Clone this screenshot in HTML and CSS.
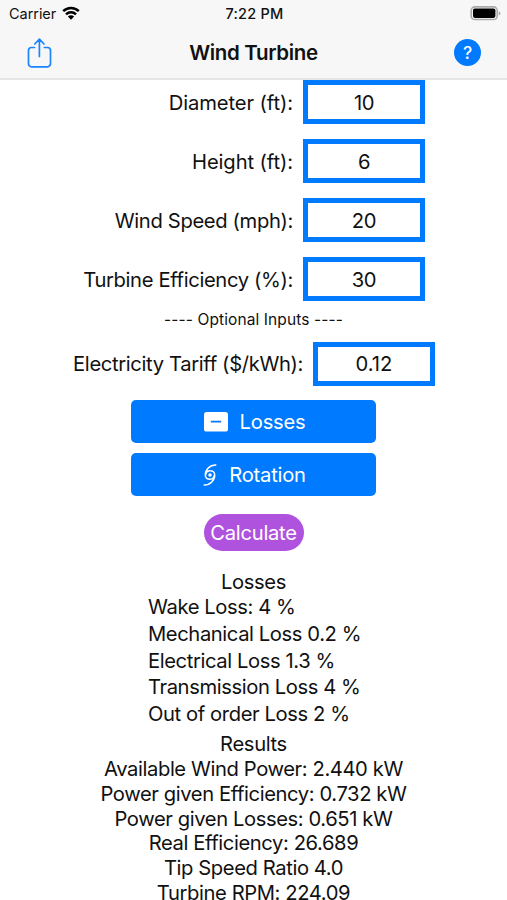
FILE: index.html
```html
<!DOCTYPE html>
<html lang="en">
<head>
    <meta charset="UTF-8">
    <meta name="viewport" content="width=device-width, initial-scale=1.0">
    <title>Wind Turbine</title>
    <link rel="stylesheet" href="styles.css">
</head>
<body>
    <header class="header">
        <div class="status-bar">
            <div class="carrier">
                <span>Carrier</span>
                <svg class="wifi" viewBox="0 0 18 14">
                    <path d="M1.2 5.2a11.2 11.2 0 0 1 15.6 0M4 8.3a7.2 7.2 0 0 1 10 0" fill="none" stroke="#000" stroke-width="2.5"/>
                    <path d="M9 13.8L5.9 10.5a4.4 4.4 0 0 1 6.2 0z"/>
                </svg>
            </div>
            <div class="time">7:22 PM</div>
            <svg class="battery" viewBox="0 0 31 15">
                <rect x="1.2" y="0.9" width="26" height="12.6" rx="3.6" fill="#f7f7f7" stroke="#aaa" stroke-width="1.6"/>
                <rect x="3" y="2.5" width="22.4" height="9.4" rx="1.8"/>
                <path d="M28.7 5.2c2.4 1 2.4 3.2 0 4.2z" fill="#aaa"/>
            </svg>
        </div>
        <div class="nav-bar">
            <svg class="share" viewBox="0 0 26 30" fill="none" stroke="#1a84fc" stroke-width="1.7" stroke-linecap="round" stroke-linejoin="round">
                <path d="M8.5 9.5H5.5A3 3 0 0 0 2.5 12.5V25.8a3 3 0 0 0 3 3h16a3 3 0 0 0 3-3V12.5a3 3 0 0 0-3-3H18.3M13.4 18.5V1.5M8.8 6L13.4 1.2 18 6"/>
            </svg>
            <h1>Wind Turbine</h1>
            <button class="help">?</button>
        </div>
    </header>
    <main class="container">
        <div class="form-group">
            <label for="diameter" class="wide">Diameter (ft):</label>
            <input type="text" id="diameter" value="10">
        </div>
        <div class="form-group">
            <label for="height" class="wide">Height (ft):</label>
            <input type="text" id="height" value="6">
        </div>
        <div class="form-group">
            <label for="speed">Wind Speed (mph):</label>
            <input type="text" id="speed" value="20">
        </div>
        <div class="form-group">
            <label for="efficiency">Turbine Efficiency (%):</label>
            <input type="text" id="efficiency" value="30">
        </div>
        <p class="optional">---- Optional Inputs ----</p>
        <div class="form-group tariff">
            <label for="tariff">Electricity Tariff ($/kWh):</label>
            <input type="text" id="tariff" value="0.12">
        </div>
        <button class="option-btn">
            <svg class="minus-icon" viewBox="0 0 24 20">
                <rect width="24" height="19.5" rx="2.6" fill="#fff"/>
                <path d="M7.6 9.7h8.8" stroke="#007aff" stroke-width="1.8" stroke-linecap="round"/>
            </svg>
            <span>Losses</span>
        </button>
        <button class="option-btn">
            <svg class="spin-icon" viewBox="0 0 14 22" fill="none" stroke="#fff" stroke-width="1.5" stroke-linecap="round">
                <circle cx="7" cy="11" r="1" fill="#fff"/>
                <path d="M12.8 1C7 .8 2 5.8 2.3 11.2c.2 2.4 2.1 4 4.5 4a4.3 4.3 0 0 0 4.4-3.7M1.2 21c5.8.2 10.8-4.8 10.5-10.2-.2-2.4-2.1-4-4.5-4a4.3 4.3 0 0 0-4.4 3.7"/>
            </svg>
            <span>Rotation</span>
        </button>
        <button class="calculate-btn">Calculate</button>
        <h2 class="losses-title">Losses</h2>
        <ul class="losses">
            <li>Wake Loss: 4 %</li>
            <li>Mechanical Loss 0.2 %</li>
            <li>Electrical Loss 1.3 %</li>
            <li>Transmission Loss 4 %</li>
            <li>Out of order Loss 2 %</li>
        </ul>
        <h2 class="results-title">Results</h2>
        <ul class="results">
            <li>Available Wind Power: 2.440 kW</li>
            <li>Power given Efficiency: 0.732 kW</li>
            <li>Power given Losses: 0.651 kW</li>
            <li>Real Efficiency: 26.689</li>
            <li>Tip Speed Ratio 4.0</li>
            <li>Turbine RPM: 224.09</li>
        </ul>
    </main>
</body>
</html>
```
FILE: styles.css
```css
*{
    box-sizing: border-box;
}
body{
    margin: 0;
    height: 900px;
    display: flex;
    flex-direction: column;
    overflow: hidden;
    background-color: #fff;
    color: #111;
    font-family: Inter, "Liberation Sans", sans-serif;
    font-size: 20.2px;
    letter-spacing: -0.35px;
}
h1, h2, p, ul{
    margin: 0;
    padding: 0;
    font-weight: 400;
    list-style: none;
}
button, input{
    font: inherit;
    letter-spacing: inherit;
    border: none;
    padding: 0;
}
svg{
    display: block;
}
.header{
    flex: none;
    height: 80px;
    background-color: #f7f7f7;
    border-bottom: 2px solid #e6e6e6;
}
.status-bar{
    display: grid;
    grid-template-columns: 1fr auto 1fr;
    align-items: center;
    height: 27px;
    padding: 0 7px 0 9px;
}
.carrier{
    display: flex;
    align-items: center;
    gap: 6px;
    font-size: 14.5px;
    letter-spacing: -0.05px;
}
.wifi{
    width: 18px;
    height: 14px;
    margin-top: -1px;
}
.time{
    font-weight: 550;
    font-size: 14.5px;
    letter-spacing: 0.25px;
}
.battery{
    width: 31px;
    height: 15px;
    justify-self: end;
    margin-right: -1px;
}
.nav-bar{
    display: grid;
    grid-template-columns: 1fr auto 1fr;
    align-items: center;
    height: 51px;
    padding: 0 26px;
}
.share{
    width: 26px;
    height: 30px;
}
h1{
    font-size: 20.5px;
    font-weight: 600;
    letter-spacing: -0.35px;
}
.help{
    justify-self: end;
    width: 27px;
    height: 27px;
    border-radius: 50%;
    background-color: #007aff;
    color: #fff;
    font-size: 17.5px;
    font-weight: 500;
}
.container{
    display: flex;
    flex-direction: column;
    align-items: center;
}
.form-group{
    display: flex;
    align-items: center;
    justify-content: flex-end;
    gap: 10px;
    width: 343px;
    height: 44px;
    margin-bottom: 15px;
    white-space: nowrap;
}
.form-group label{
    padding-top: 1px;
}
.form-group .wide{
    letter-spacing: -0.1px;
}
.form-group input{
    flex: none;
    width: 122px;
    height: 44px;
    padding-top: 1px;
    border: 5px solid #007aff;
    background-color: #fff;
    color: #111;
    text-align: center;
}
.optional{
    margin-top: -5px;
    height: 31px;
    line-height: 18px;
    font-size: 15.5px;
    letter-spacing: 0.1px;
}
.tariff{
    width: 363px;
    margin-bottom: 14px;
}
.form-group.tariff label, .form-group.tariff input{
    padding-top: 0;
    padding-bottom: 1px;
}
.form-group.tariff input{
    letter-spacing: 0;
}
.option-btn{
    display: flex;
    align-items: center;
    justify-content: center;
    gap: 12px;
    width: 245px;
    height: 43px;
    margin-bottom: 10px;
    padding-left: 2px;
    border-radius: 5px;
    background-color: #007aff;
    color: #fff;
    letter-spacing: -0.25px;
}
.minus-icon{
    width: 24px;
    height: 20px;
}
.spin-icon{
    width: 14px;
    height: 22px;
}
.calculate-btn{
    width: 100px;
    height: 37px;
    margin-top: 8px;
    border-radius: 19px;
    background-color: #af52de;
    color: #fff;
    letter-spacing: -0.25px;
}
h2{
    font-size: 20.2px;
    line-height: 25px;
}
.losses-title{
    margin-top: 18px;
}
.losses{
    width: 211px;
    line-height: 26.8px;
    white-space: nowrap;
    letter-spacing: -0.4px;
}
.results-title{
    margin-top: 3px;
}
.results{
    margin-top: 1px;
    line-height: 24.8px;
    text-align: center;
    letter-spacing: -0.4px;
}
```
